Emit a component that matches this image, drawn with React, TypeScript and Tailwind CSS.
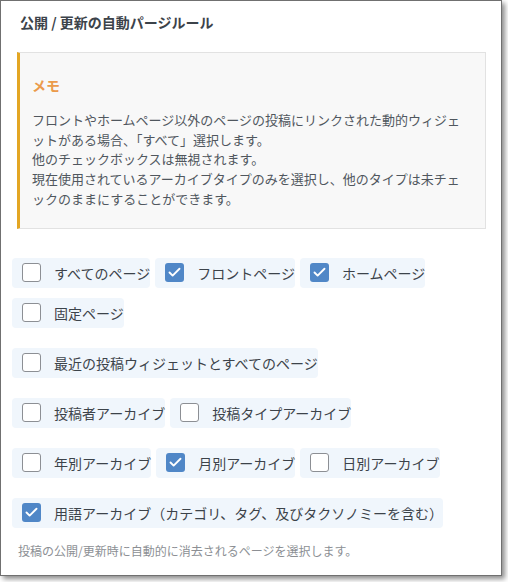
import { Check } from "lucide-react";

type Item = { label: string; checked?: boolean };

const groups: Item[][] = [
  [
    { label: "すべてのページ" },
    { label: "フロントページ", checked: true },
    { label: "ホームページ", checked: true },
    { label: "固定ページ" },
  ],
  [{ label: "最近の投稿ウィジェットとすべてのページ" }],
  [{ label: "投稿者アーカイブ" }, { label: "投稿タイプアーカイブ" }],
  [
    { label: "年別アーカイブ" },
    { label: "月別アーカイブ", checked: true },
    { label: "日別アーカイブ" },
  ],
  [{ label: "用語アーカイブ（カテゴリ、タグ、及びタクソノミーを含む）", checked: true }],
];

function CheckItem({ label, checked }: Item) {
  return (
    <label className="flex h-[30px] items-center gap-[13px] rounded-[4px] bg-[#f0f6fc] pl-[10px] pr-0">
      {checked ? (
        <span className="flex h-[19px] w-[19px] items-center justify-center rounded-[3px] bg-[#5087c7]">
          <Check className="h-[15px] w-[15px] text-white" strokeWidth={3} />
        </span>
      ) : (
        <span className="h-[19px] w-[19px] rounded-[3px] border border-[#8c8f94] bg-white" />
      )}
      <span className="text-[14px] leading-5 text-[#3c434a]">{label}</span>
    </label>
  );
}

export default function App() {
  return (
    <div className="h-[582px] w-[508px] bg-white font-['Noto_Sans_CJK_JP','Noto_Sans',sans-serif]">
      <div className="h-[576px] w-[502px] border border-[#707070] bg-white shadow-[3px_3px_5px_rgba(0,0,0,0.45)]">
        <h2 className="ml-[19px] mt-[11px] text-[14px] font-bold leading-5 text-[#3c434a]">
          公開 / 更新の自動パージルール
        </h2>

        <div className="ml-[16px] mr-[15px] mt-[20px] border border-l-[3px] border-[#e2e2e2] border-l-[#e3a623] bg-[#f8f8f8] pb-[19px] pl-[12px] pr-[14px] pt-[22px]">
          <div className="text-[14px] font-bold leading-5 text-[#eb9b4c]">メモ</div>
          <p className="mt-[15px] text-[13px] leading-[19.7px] text-[#50575e]">
            フロントやホームページ以外のページの投稿にリンクされた動的ウィジェットがある場合、「すべて」選択します。
            <br />
            他のチェックボックスは無視されます。
            <br />
            現在使用されているアーカイブタイプのみを選択し、他のタイプは未チェックのままにすることができます。
          </p>
        </div>

        <div className="ml-[11px] mr-[12px] mt-[29px] flex flex-col gap-[20px]">
          {groups.map((g, i) => (
            <div key={i} className="flex flex-wrap gap-x-[5px] gap-y-[10px]">
              {g.map((it) => (
                <CheckItem key={it.label} {...it} />
              ))}
            </div>
          ))}
        </div>

        <p className="ml-[17px] mt-[15px] text-[12px] leading-4 text-[#8c8f94]">
          投稿の公開/更新時に自動的に消去されるページを選択します。
        </p>
      </div>
    </div>
  );
}
